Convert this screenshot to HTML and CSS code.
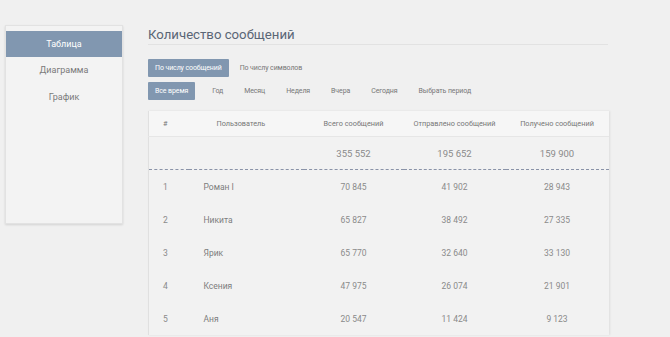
FILE: index.html
```html
<!DOCTYPE html>
<html lang="ru">
<head>
  <meta charset="UTF-8" />
  <title>Количество сообщений</title>
  <link rel="stylesheet" href="styles.css">
</head>
<body>
  <div class="page">
    <div class="sidebar">
      <div class="side-item active">Таблица</div>
      <div class="side-item">Диаграмма</div>
      <div class="side-item">График</div>
    </div>

    <div class="main">
      <div class="title">Количество сообщений</div>

      <div class="tabs">
        <span class="btn active">По числу сообщений</span>
        <span class="btn">По числу символов</span>
      </div>

      <div class="periods">
        <span class="btn active">Все время</span>
        <span class="btn">Год</span>
        <span class="btn">Месяц</span>
        <span class="btn">Неделя</span>
        <span class="btn">Вчера</span>
        <span class="btn">Сегодня</span>
        <span class="btn">Выбрать период</span>
      </div>

      <table class="stats">
        <colgroup>
          <col style="width: 40px">
          <col style="width: 115px">
          <col style="width: 100px">
          <col style="width: 102px">
          <col style="width: 103px">
        </colgroup>
        <thead>
          <tr>
            <th class="num">#</th>
            <th class="user">Пользователь</th>
            <th>Всего сообщений</th>
            <th>Отправлено сообщений</th>
            <th>Получено сообщений</th>
          </tr>
        </thead>
        <tbody>
          <tr class="total">
            <td></td>
            <td></td>
            <td>355 552</td>
            <td>195 652</td>
            <td>159 900</td>
          </tr>
          <tr>
            <td class="num">1</td>
            <td class="user">Роман I</td>
            <td>70 845</td>
            <td>41 902</td>
            <td>28 943</td>
          </tr>
          <tr>
            <td class="num">2</td>
            <td class="user">Никита</td>
            <td>65 827</td>
            <td>38 492</td>
            <td>27 335</td>
          </tr>
          <tr>
            <td class="num">3</td>
            <td class="user">Ярик</td>
            <td>65 770</td>
            <td>32 640</td>
            <td>33 130</td>
          </tr>
          <tr>
            <td class="num">4</td>
            <td class="user">Ксения</td>
            <td>47 975</td>
            <td>26 074</td>
            <td>21 901</td>
          </tr>
          <tr>
            <td class="num">5</td>
            <td class="user">Аня</td>
            <td>20 547</td>
            <td>11 424</td>
            <td>9 123</td>
          </tr>
        </tbody>
      </table>
    </div>
  </div>
</body>
</html>
```

FILE: styles.css
```css
html, body {
  margin: 0;
  padding: 0;
  height: 100%;
  overflow: hidden;
  background: #f0f0f0;
  font-family: Roboto, "Liberation Sans", sans-serif;
  color: #777;
}

.page {
  display: flex;
  align-items: flex-start;
  padding: 25px 0 0 5px;
}

/* Меню слева */
.sidebar {
  width: 116px;
  height: 192px;
  padding-top: 5px;
  background: #f3f3f3;
  border: 1px solid #e2e2e2;
  box-shadow: 0 1px 2px rgba(0, 0, 0, 0.12);
}

.side-item {
  height: 27px;
  line-height: 27px;
  text-align: center;
  font-size: 9px;
  color: #7a7a7a;
}

.side-item.active {
  height: 26px;
  line-height: 26px;
  background: #8197b0;
  color: #fff;
}

.main {
  margin-left: 25px;
  width: 460px;
}

.title {
  font-size: 13.2px;
  color: #5a6676;
  line-height: 18px;
  padding-top: 1px;
  height: 18px;
  border-bottom: 1px solid #e2e2e2;
}

.tabs, .periods {
  display: flex;
  align-items: center;
  font-size: 7px;
  letter-spacing: -0.1px;
}

.tabs {
  margin-top: 14px;
}

.periods {
  margin-top: 5px;
}

.btn {
  height: 18px;
  line-height: 18px;
  padding: 0 6px;
  color: #777;
}

.tabs .btn + .btn {
  margin-left: 5px;
}

.periods .btn {
  margin-right: 9px;
}

.periods .btn.active {
  padding: 0 7px;
  margin-right: 11px;
}

.btn.active {
  padding: 0 6px;
  background: #8197b0;
  color: #fff;
  border-radius: 1px;
}

.tabs .btn.active {
  padding: 0 7px;
}

/* Таблица */
.stats {
  margin-top: 11px;
  width: 460px;
  table-layout: fixed;
  border-collapse: collapse;
  background: #f2f2f2;
  border-left: 1px solid #e0e0e0;
  box-shadow: 1px 0 2px rgba(0, 0, 0, 0.08);
}

.stats th {
  height: 25px;
  padding: 0;
  font-weight: normal;
  font-size: 7.3px;
  color: #777;
  text-align: center;
  background: #f6f6f6;
  border-bottom: 1px solid #e6e6e6;
}

.stats td {
  height: 33px;
  padding: 0;
  text-align: center;
  font-size: 8.5px;
  color: #8a8a8a;
}

.stats .num {
  text-align: left;
  padding-left: 14px;
}

.stats th.user {
  text-align: left;
  padding-left: 28px;
}

.stats td.user {
  text-align: left;
  padding-left: 15px;
  color: #7d7d7d;
}

.stats tr.total td {
  height: 32px;
  font-size: 9.5px;
  border-bottom: 1px dashed #8a93a8;
}
```
